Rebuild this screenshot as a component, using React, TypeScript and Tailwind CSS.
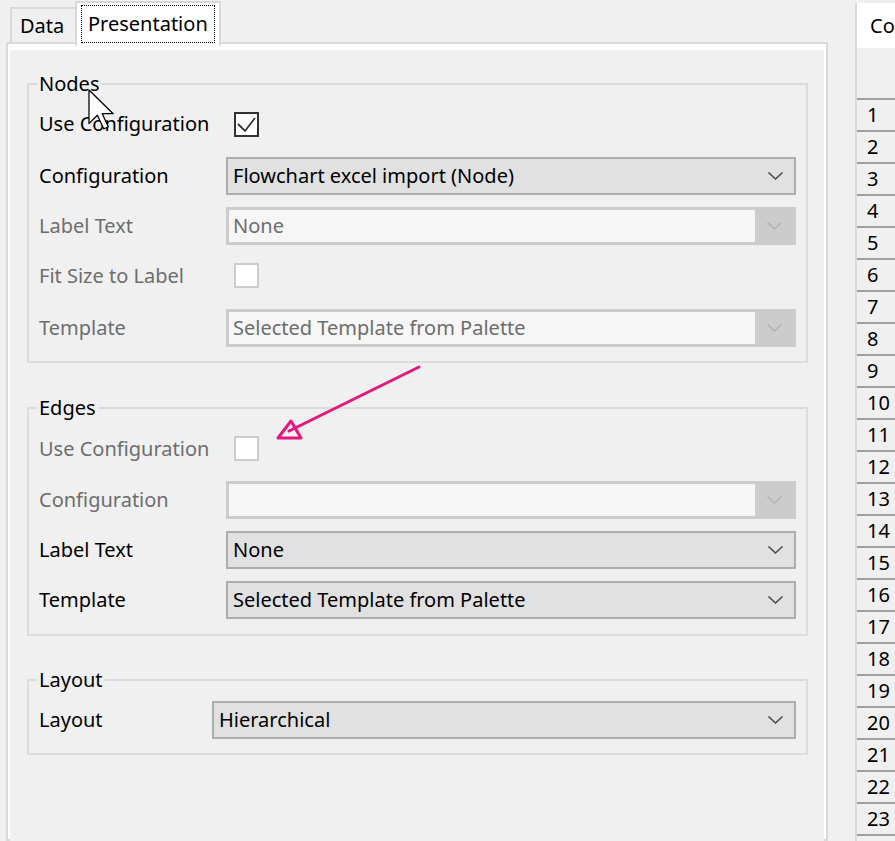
import React from "react";

type Kind = "enabled" | "disabled";

function Chevron({ kind }: { kind: Kind }) {
  return (
    <svg width="17" height="10" viewBox="0 0 17 10" className="block">
      <path
        d="M1.5 1.5 L8.5 8 L15.5 1.5"
        fill="none"
        stroke={kind === "enabled" ? "#4a4a4a" : "#b3b3b3"}
        strokeWidth="1.6"
      />
    </svg>
  );
}

function Combo({ value, kind }: { value?: string; kind: Kind }) {
  if (kind === "disabled") {
    return (
      <div className="flex h-[38px] items-stretch border-[3px] border-[#cccccc] bg-[#cccccc]">
        <div className="flex flex-1 items-center bg-[#f6f6f6] pl-[4px] text-[#6d6d6d]">{value}</div>
        <div className="flex w-[38px] items-center justify-center">
          <Chevron kind="disabled" />
        </div>
      </div>
    );
  }
  return (
    <div className="flex h-[38px] items-center border-2 border-[#adadad] bg-[#e1e1e1]">
      <div className="flex-1 pl-[5px] text-black">{value}</div>
      <div className="flex w-[38px] items-center justify-center">
        <Chevron kind="enabled" />
      </div>
    </div>
  );
}

function Check({ checked, kind }: { checked?: boolean; kind: Kind }) {
  return (
    <div
      className={
        kind === "enabled"
          ? "ml-[8px] h-[25px] w-[25px] border-2 border-[#333333] bg-white"
          : "ml-[8px] h-[25px] w-[25px] border-2 border-[#cccccc] bg-white"
      }
    >
      {checked && (
        <svg width="21" height="21" viewBox="0 0 21 21" className="block">
          <path d="M2 10 L9 17 L19 4" fill="none" stroke="#333333" strokeWidth="1.8" />
        </svg>
      )}
    </div>
  );
}

function Row({
  label,
  kind,
  wide = true,
  className,
  children,
}: {
  label: string;
  kind: Kind;
  wide?: boolean;
  className: string;
  children: React.ReactNode;
}) {
  return (
    <div className={`flex items-center ${className}`}>
      <div
        className={`${wide ? "w-[187px]" : "w-[173px]"} shrink-0 whitespace-nowrap ${
          kind === "enabled" ? "text-black" : "text-[#6d6d6d]"
        }`}
      >
        {label}
      </div>
      <div className="flex-1">{children}</div>
    </div>
  );
}

function Group({ title, className, children }: { title: string; className: string; children: React.ReactNode }) {
  return (
    <fieldset className={`border-2 border-[#dcdcdc] px-[10px] ${className}`}>
      <legend className="-ml-[2px] px-[2px] leading-[24px] text-black">{title}</legend>
      {children}
    </fieldset>
  );
}

const rows = Array.from({ length: 23 }, (_, i) => i + 1);

export default function App() {
  return (
    <div className="relative flex h-[841px] w-[895px] overflow-hidden bg-[#f0f0f0] font-['Noto_Sans',sans-serif] text-[20px]">
      {/* left: tab control */}
      <div className="flex w-[828px] shrink-0 flex-col pl-[6px]">
        <div className="flex h-[42px] items-start pl-[4px]">
          <div className="mt-[7px] flex h-[35px] w-[67px] items-center border-2 border-b-0 border-[#d9d9d9] pl-[8px]">
            Data
          </div>
          <div className="relative z-10 -ml-[2px] mt-[1px] h-[45px] w-[146px] border-2 border-b-0 border-[#d9d9d9] bg-white px-[4px] pt-[2px]">
            <div className="flex h-[38px] items-center border border-dotted border-black pl-[6px]">Presentation</div>
          </div>
        </div>
        <div className="flex-1 border-2 border-[#d9d9d9] bg-white">
          <div className="mx-[2px] mt-[6px] h-full bg-[#f0f0f0] pl-[17px] pr-[16px] pt-[22px]">
            <Group title="Nodes" className="pb-[14px]">
              <Row label="Use Configuration" kind="enabled" className="mt-[15px] h-[26px]">
                <Check kind="enabled" checked />
              </Row>
              <Row label="Configuration" kind="enabled" className="mt-[20px] h-[38px]">
                <Combo kind="enabled" value="Flowchart excel import (Node)" />
              </Row>
              <Row label="Label Text" kind="disabled" className="mt-[12px] h-[38px]">
                <Combo kind="disabled" value="None" />
              </Row>
              <Row label="Fit Size to Label" kind="disabled" className="mt-[18px] h-[25px]">
                <Check kind="disabled" />
              </Row>
              <Row label="Template" kind="disabled" className="mt-[21px] h-[38px]">
                <Combo kind="disabled" value="Selected Template from Palette" />
              </Row>
            </Group>

            <Group title="Edges" className="mt-[33px] pb-[15px]">
              <Row label="Use Configuration" kind="disabled" className="mt-[16px] h-[25px]">
                <Check kind="disabled" />
              </Row>
              <Row label="Configuration" kind="disabled" className="mt-[20px] h-[38px]">
                <Combo kind="disabled" />
              </Row>
              <Row label="Label Text" kind="enabled" className="mt-[12px] h-[38px]">
                <Combo kind="enabled" value="None" />
              </Row>
              <Row label="Template" kind="enabled" className="mt-[12px] h-[38px]">
                <Combo kind="enabled" value="Selected Template from Palette" />
              </Row>
            </Group>

            <Group title="Layout" className="mt-[32px] pb-[14px]">
              <Row label="Layout" kind="enabled" wide={false} className="mt-[9px] h-[38px]">
                <Combo kind="enabled" value="Hierarchical" />
              </Row>
            </Group>
          </div>
        </div>
      </div>

      <div className="w-[27px] shrink-0" />

      {/* right: grid with row numbers */}
      <div className="flex w-[40px] shrink-0 flex-col pt-[3px]">
        <div className="flex flex-1 flex-col border-l-2 border-[#d9d9d9]">
          <div className="flex h-[45px] items-center bg-white pl-[13px]">Co</div>
          <div className="h-[50px]" />
          {rows.map((n) => (
            <div key={n} className="flex h-[32px] shrink-0 items-center border-t-2 border-[#a0a0a0] pl-[10px]">
              {n}
            </div>
          ))}
          <div className="border-t-2 border-[#a0a0a0]" />
        </div>
      </div>

      {/* annotations on top */}
      <svg className="pointer-events-none absolute left-0 top-0" width="895" height="841">
        <line x1="419" y1="367" x2="289" y2="431" stroke="#e4177f" strokeWidth="3" strokeLinecap="round" />
        <polygon points="291,421 278,438 301,438" fill="none" stroke="#e4177f" strokeWidth="3" strokeLinejoin="round" />
        <g transform="translate(89 90) scale(2.1)">
          <path
            d="M0 0 L0 16 L4 12 L7 18.5 L9.2 17.5 L6.3 11.3 L11.5 11.3 Z"
            fill="white"
            stroke="black"
            strokeWidth="0.6"
            strokeLinejoin="round"
          />
        </g>
      </svg>
    </div>
  );
}
